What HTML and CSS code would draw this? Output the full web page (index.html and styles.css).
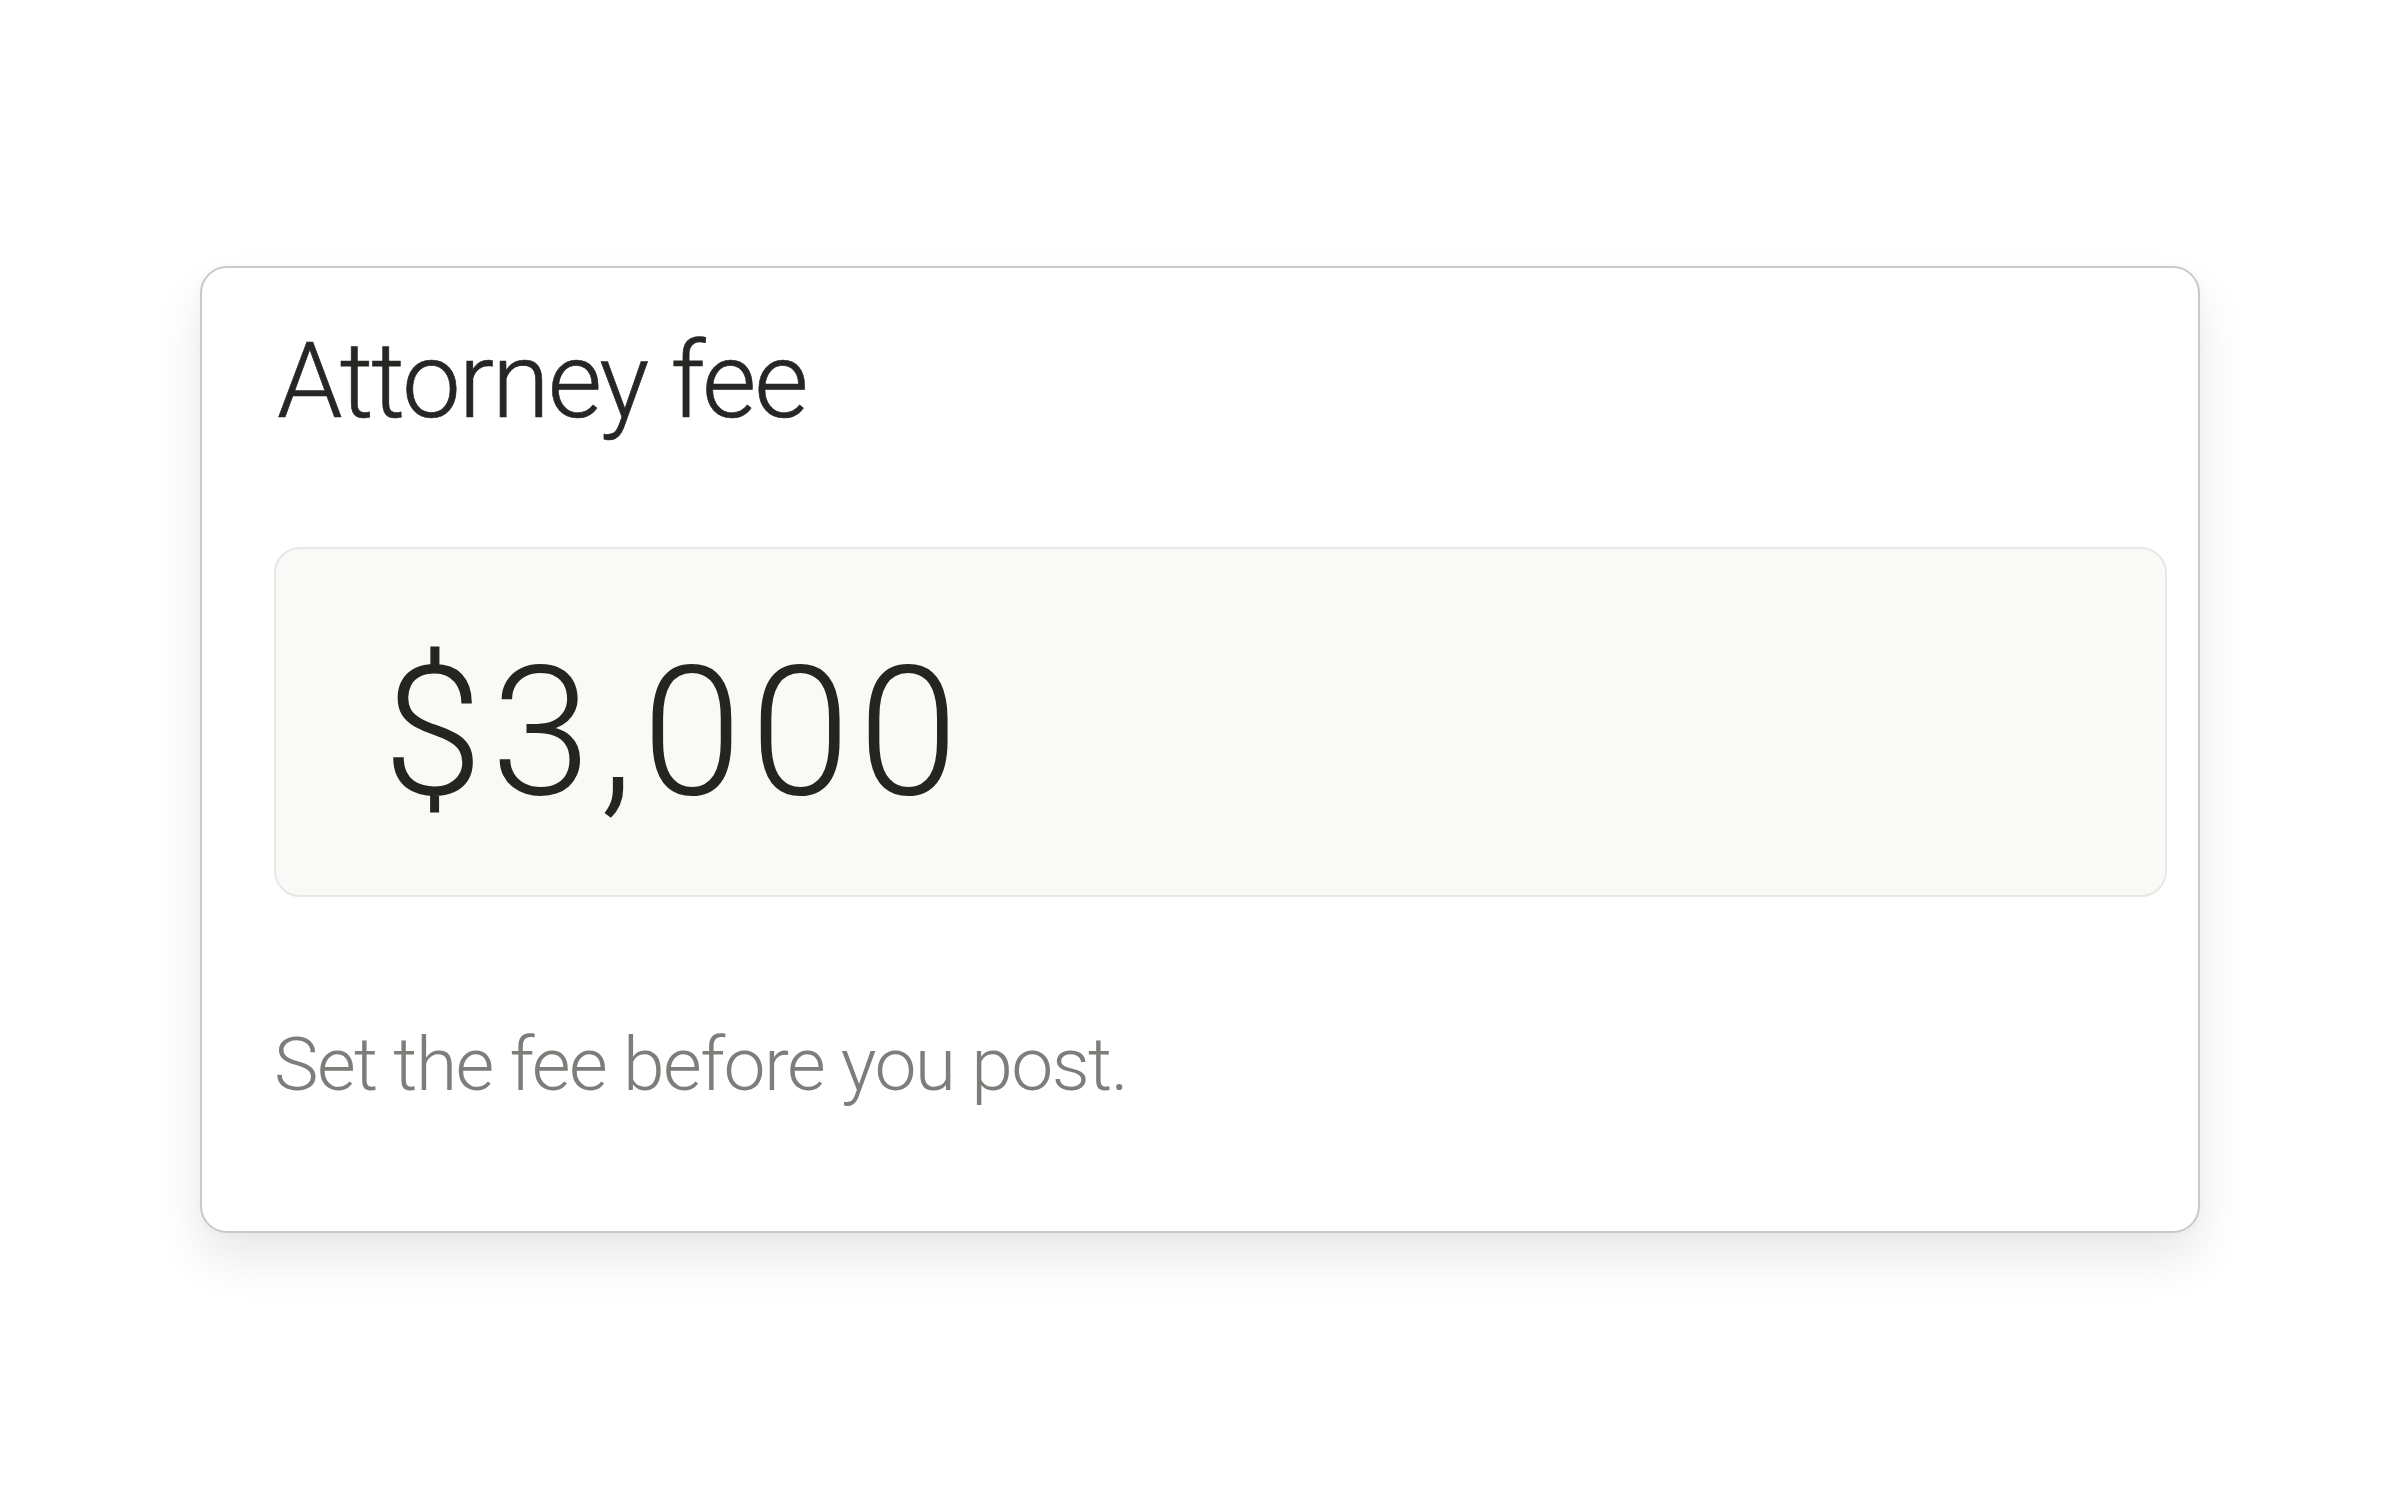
FILE: index.html
```html
<!DOCTYPE html>
<html lang="en">
<head>
<meta charset="utf-8">
<title>Attorney fee</title>
<link rel="stylesheet" href="styles.css">
</head>
<body>
<main class="page">
  <section class="card">
    <h1 class="card-title">Attorney fee</h1>
    <div class="amount-field">
      <span class="amount">$3,000</span>
    </div>
    <p class="hint">Set the fee before you post.</p>
  </section>
</main>
</body>
</html>
```

FILE: styles.css
```css
html, body {
  margin: 0;
  padding: 0;
  background: #ffffff;
}

body {
  font-family: Roboto, "Liberation Sans", Arial, sans-serif;
  color: #262724;
}

.page {
  padding: 266px 0 200px 200px;
}

.card {
  box-sizing: border-box;
  width: 2000px;
  height: 967px;
  border: 2px solid #c9c9c8;
  border-radius: 27px;
  background: #ffffff;
  padding: 61px 31px 0 72px;
  box-shadow: 0 26px 50px rgba(0, 0, 0, 0.09), 0 2px 8px rgba(0, 0, 0, 0.03);
  display: flex;
  flex-direction: column;
}

.card-title {
  margin: 0;
  padding-left: 3px;
  font-size: 105px;
  line-height: 1;
  font-weight: 300;
  -webkit-text-stroke: 0.6px #262724;
  letter-spacing: -0.02em;
  color: #262724;
}

.amount-field {
  box-sizing: border-box;
  margin-top: 113px;
  height: 350px;
  border: 2px solid #e7e7e4;
  border-radius: 26px;
  background: #f9f9f7;
  padding: 94px 0 0 107px;
}

.amount {
  display: block;
  font-size: 180px;
  line-height: 1;
  font-weight: 300;
  letter-spacing: 0.046em;
  color: #232521;
}

.hint {
  margin: 130px 0 0 0;
  font-size: 75px;
  line-height: 1;
  font-weight: 300;
  letter-spacing: -0.021em;
  color: #7b7e79;
}
```
